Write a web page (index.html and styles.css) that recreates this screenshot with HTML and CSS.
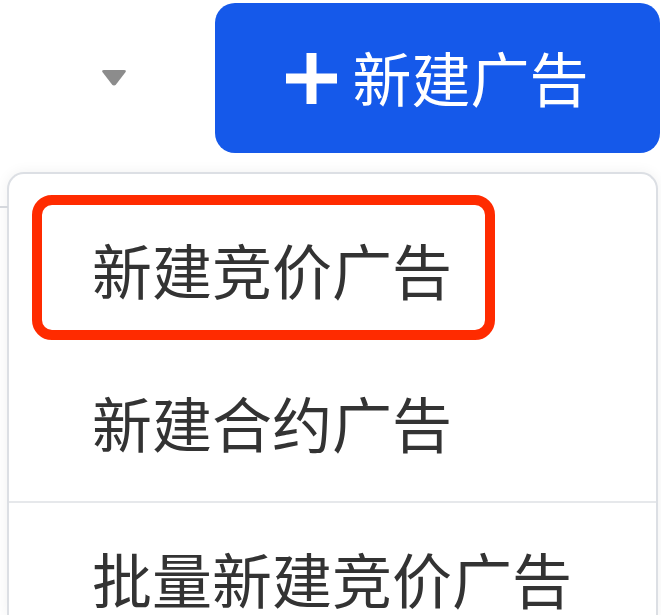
FILE: index.html
```html
<!DOCTYPE html>
<html lang="zh-CN">
<head>
<meta charset="utf-8">
<title>新建广告</title>
<link rel="stylesheet" href="styles.css">
</head>
<body>
  <div class="bg-line"></div>
  <div class="toolbar">
    <div class="caret-wrap">
      <svg class="caret" width="26" height="17" viewBox="0 0 26 17">
        <path d="M3 1 H23 Q26 1 24.2 3.6 L15.2 15.2 Q13 17.8 10.8 15.2 L1.8 3.6 Q0 1 3 1 Z" fill="#8c8c8c"/>
      </svg>
    </div>
    <button class="btn-new" type="button">
      <svg class="plus" width="51" height="51" viewBox="0 0 51 51">
        <rect x="20.5" y="0" width="10" height="51" fill="#fff"/>
        <rect x="0" y="20.5" width="51" height="10" fill="#fff"/>
      </svg>
      <span class="btn-label">新建广告</span>
    </button>
  </div>
  <div class="menu">
    <div class="menu-item">
      <span class="annot"></span>
      <span class="menu-label">新建竞价广告</span>
    </div>
    <div class="menu-item">
      <span class="menu-label">新建合约广告</span>
    </div>
    <div class="menu-divider"></div>
    <div class="menu-item menu-item-last">
      <span class="menu-label">批量新建竞价广告</span>
    </div>
  </div>
</body>
</html>
```

FILE: styles.css
```css
html, body {
  margin: 0;
  padding: 0;
  background: #ffffff;
  overflow: hidden;
}

body {
  font-family: "Noto Sans CJK SC", "Noto Sans", sans-serif;
  color: #333333;
  position: relative;
  height: 615px;
}

.bg-line {
  position: absolute;
  left: 0;
  top: 206px;
  width: 8px;
  height: 2px;
  background: #d5d8dd;
}

.toolbar {
  display: flex;
  align-items: center;
  margin-top: 3px;
  height: 150px;
}

.caret-wrap {
  width: 215px;
  box-sizing: border-box;
  padding-left: 101px;
  display: flex;
  align-items: center;
  padding-bottom: 1px;
}

.caret {
  display: block;
}

.btn-new {
  width: 445px;
  height: 150px;
  border: none;
  border-radius: 20px;
  background: #1559ea;
  color: #ffffff;
  display: flex;
  align-items: center;
  justify-content: center;
  gap: 15px;
  padding: 0;
  font-family: "Noto Sans CJK SC", "Noto Sans", sans-serif;
  font-size: 59px;
  line-height: 59px;
  cursor: pointer;
}

.plus {
  display: block;
  flex: none;
}

.btn-label {
  display: block;
  padding-bottom: 4px;
}

.menu {
  margin: 19px 3px 0 7px;
  border: 2px solid #dcdfe4;
  border-bottom: none;
  border-radius: 17px 17px 0 0;
  padding-top: 21px;
  height: 422px;
  background: #ffffff;
  box-shadow: 0 0 14px rgba(0, 0, 0, 0.06);
}

.menu-item {
  position: relative;
  height: 153px;
  box-sizing: border-box;
  display: flex;
  align-items: center;
  padding-left: 83px;
  padding-bottom: 6px;
  font-size: 60px;
  line-height: 60px;
  color: #333333;
}

.menu-item-last {
  height: 110px;
  align-items: flex-start;
  padding-top: 45px;
  padding-bottom: 0;
}

.menu-label {
  white-space: nowrap;
}

.annot {
  position: absolute;
  left: 23px;
  top: 0;
  width: 463px;
  height: 145px;
  box-sizing: border-box;
  border: 10px solid #ff2b00;
  border-radius: 20px;
}

.menu-divider {
  height: 2px;
  background: #e6e8eb;
}
```
